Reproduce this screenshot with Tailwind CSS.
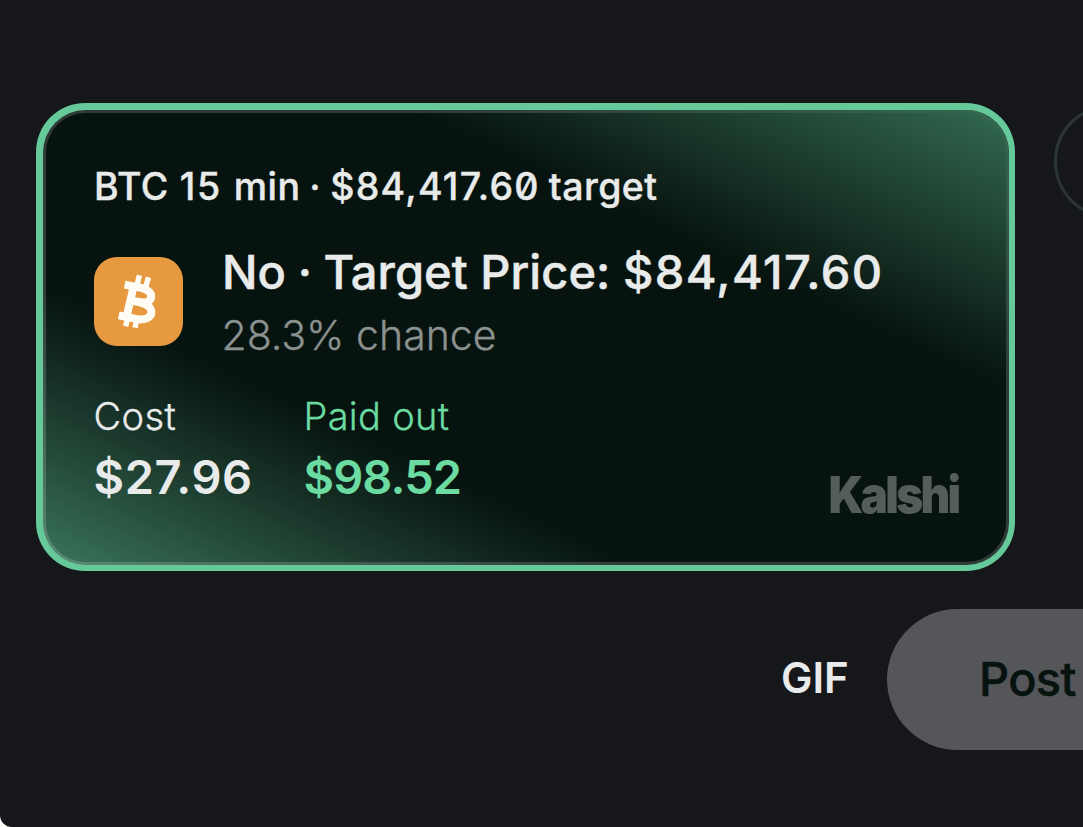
<!DOCTYPE html>
<html lang="en">
  <head>
    <meta charset="UTF-8" />
    <meta name="viewport" content="width=device-width, initial-scale=1.0" />
    <script src="https://cdn.jsdelivr.net/npm/@tailwindcss/browser@4"></script>
    <title>New post</title>
  </head>
  <body class="bg-[#fdfcf8] font-['Inter',sans-serif]">
    <main class="w-full h-screen overflow-hidden rounded-bl-[12px] bg-[#15171b] pt-[103px] text-[#e8ebea] whitespace-nowrap">
      <div class="flex items-start gap-[39px] pl-9">
        <!-- Position card -->
        <section class="w-[979px] h-[468px] shrink-0 rounded-[49px] bg-[#66c99a] p-[6.5px]">
          <div class="h-full rounded-[42.5px] border-[3px] border-white/17 bg-linear-to-tr from-[#3b765b] from-0% via-[#07130f] via-31% to-[#07130f] to-31% bg-origin-border">
            <div class="-m-[3px] h-[455px] rounded-[42.5px] bg-linear-to-bl from-[#336a50] from-0% to-[#07130f]/0 to-31% pl-[51px] pr-[50px] pt-[54.5px]">
              <h2 class="h-[46px] leading-[46px] pl-[0.5px] text-[37.5px] font-medium tracking-[0.45px] [word-spacing:-1.5px] [-webkit-text-stroke:0.4px]">BTC <span class="pl-0.5 pr-[3px] tracking-[1.7px]">15</span> min · <span class="tracking-[1.3px]">$84,417.6<span class="[font-feature-settings:'zero']">0</span></span> target</h2>

              <div class="mt-[33px] flex gap-[39px]">
                <div class="mt-[14px] size-[89px] shrink-0 rounded-[23px] bg-[#e6993f]">
                  <svg class="size-full" viewBox="0 0 90 90" fill="none" stroke="#fffcf5">
                    <g stroke-width="8">
                      <path d="M31 28 L49 31.500 C62 35 60 47 48 46 L38 44" />
                      <path d="M47 46 C63 49 61 65 45 63 L25 59" />
                      <path d="M40.500 28 L33 60" />
                    </g>
                    <path d="M46 18.500 L43.500 28 M55 20.500 L52.500 30 M34.500 60 L32 70 M43.500 62 L41.500 71.500" stroke-width="5.500" />
                  </svg>
                </div>
                <div>
                  <h1 class="h-[58px] leading-[58px] pl-[0.5px] text-[47px] font-medium tracking-[0.05px] [-webkit-text-stroke:0.5px]">No<span class="[word-spacing:-1px]"> · </span>Target Price: <span class="tracking-[1.4px]">$84,417.60</span></h1>
                  <p class="h-[68px] leading-[68px] text-[41px] font-light text-[#8b918f] [-webkit-text-stroke:0.3px]">28.3% chance</p>
                </div>
              </div>

              <div class="mt-[22px] flex">
                <div class="w-[210px]">
                  <p class="h-[50px] leading-[50px] text-[38px] font-light tracking-[0.4px] [-webkit-text-stroke:0.3px]">Cost</p>
                  <p class="h-[72px] leading-[72px] text-[47px] font-semibold tracking-[0.6px]">$27.96</p>
                </div>
                <div class="text-[#6bdba1]">
                  <p class="h-[50px] leading-[50px] text-[38px] font-light tracking-[0.3px] [-webkit-text-stroke:0.3px]">Paid out</p>
                  <p class="h-[72px] leading-[72px] text-[47px] font-semibold tracking-[-0.9px]">$98.52</p>
                </div>
                <p class="ml-auto mt-[74px] h-[60px] origin-right scale-x-[.9] leading-[60px] text-[51px] font-black tracking-[-3px] text-[#555d5a]">Kalshi</p>
              </div>
            </div>
          </div>
        </section>
        <div class="mt-px size-[115px] shrink-0 rounded-full border-[3px] border-[#2b3634]"></div>
      </div>

      <div class="mt-[38px] flex items-center pl-[781px]">
        <button class="w-[106px] shrink-0 -mt-[3px] text-left leading-[50px] text-[42px] font-semibold">GIF</button>
        <button class="h-[141px] w-[280px] shrink-0 rounded-full bg-[#555659] pl-[92px] text-left text-[47px] font-medium tracking-[-0.7px] text-[#07130f] [-webkit-text-stroke:0.5px]">Post</button>
      </div>
    </main>
  </body>
</html>
